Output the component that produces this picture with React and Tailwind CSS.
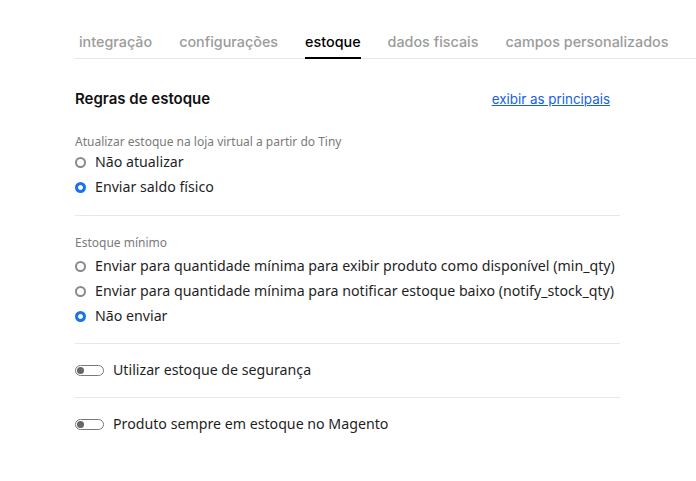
import React, { useState } from "react";

const tabs = ["integração", "configurações", "estoque", "dados fiscais", "campos personalizados"];

const Radio = ({ checked, label, onClick }) => (
  <label onClick={onClick} className="flex items-center h-[25px] cursor-pointer">
    {checked ? (
      <span className="w-[11px] h-[11px] rounded-full bg-[#1a73e8] flex items-center justify-center">
        <span className="w-[5px] h-[5px] rounded-full bg-white border border-white"></span>
      </span>
    ) : (
      <span className="w-[11px] h-[11px] rounded-full border-[2px] border-[#8a8a8a] bg-white"></span>
    )}
    <span className="ml-[9px] text-[14.2px] text-[#1f1f1f]">{label}</span>
  </label>
);

const Toggle = ({ label }) => (
  <div className="flex items-center h-[53px]">
    <span className="relative w-[29px] h-[11px] rounded-full border border-[#7a7a7a] bg-white">
      <span className="absolute left-[1px] top-[1px] w-[7px] h-[7px] rounded-full bg-[#666]"></span>
    </span>
    <span className="ml-[9px] text-[14.2px] text-[#1f1f1f]">{label}</span>
  </div>
);

const App = () => {
  const [stock, setStock] = useState(1);
  const [min, setMin] = useState(2);

  return (
    <div className="w-[696px] h-[481px] bg-white font-['Noto_Sans',sans-serif] overflow-hidden">
      <div className="pl-[75px] pt-[31px]">
        <div className="flex border-b border-[#e6e6e6] h-[28px] font-['Inter',sans-serif] text-[14.35px] font-medium">
          {tabs.map((t, i) => (
            <div
              key={t}
              className={
                "h-[28px] flex items-start shrink-0 whitespace-nowrap " +
                (i === 0 ? "ml-[4px] mr-[13.5px] " : "mx-[13.5px] ") +
                (t === "estoque"
                  ? "text-black border-b-2 border-black"
                  : "text-[#9b9b9b]")
              }
            >
              {t}
            </div>
          ))}
        </div>

        <div className="w-[545px]">
          <div className="flex items-center justify-between pt-[29px] pr-[10px]">
            <h2 className="font-['Inter',sans-serif] font-semibold text-[15px] text-[#111]">Regras de estoque</h2>
            <a href="#" className="font-['Inter',sans-serif] text-[13.4px] text-[#1560e6] underline">
              exibir as principais
            </a>
          </div>

          <div className="pt-[22px] pb-[15px] border-b border-[#e8e8e8]">
            <div className="text-[12px] text-[#7a7a7a] mb-[-1px]">Atualizar estoque na loja virtual a partir do Tiny</div>
            <Radio checked={stock === 0} onClick={() => setStock(0)} label="Não atualizar" />
            <Radio checked={stock === 1} onClick={() => setStock(1)} label="Enviar saldo físico" />
          </div>

          <div className="pt-[18px] pb-[14px] border-b border-[#e8e8e8]">
            <div className="text-[12px] text-[#7a7a7a] mb-[2px]">Estoque mínimo</div>
            <Radio checked={min === 0} onClick={() => setMin(0)} label="Enviar para quantidade mínima para exibir produto como disponível (min_qty)" />
            <Radio checked={min === 1} onClick={() => setMin(1)} label="Enviar para quantidade mínima para notificar estoque baixo (notify_stock_qty)" />
            <Radio checked={min === 2} onClick={() => setMin(2)} label="Não enviar" />
          </div>

          <div className="border-b border-[#e8e8e8]">
            <Toggle label="Utilizar estoque de segurança" />
          </div>
          <Toggle label="Produto sempre em estoque no Magento" />
        </div>
      </div>
    </div>
  );
};

export default App;
